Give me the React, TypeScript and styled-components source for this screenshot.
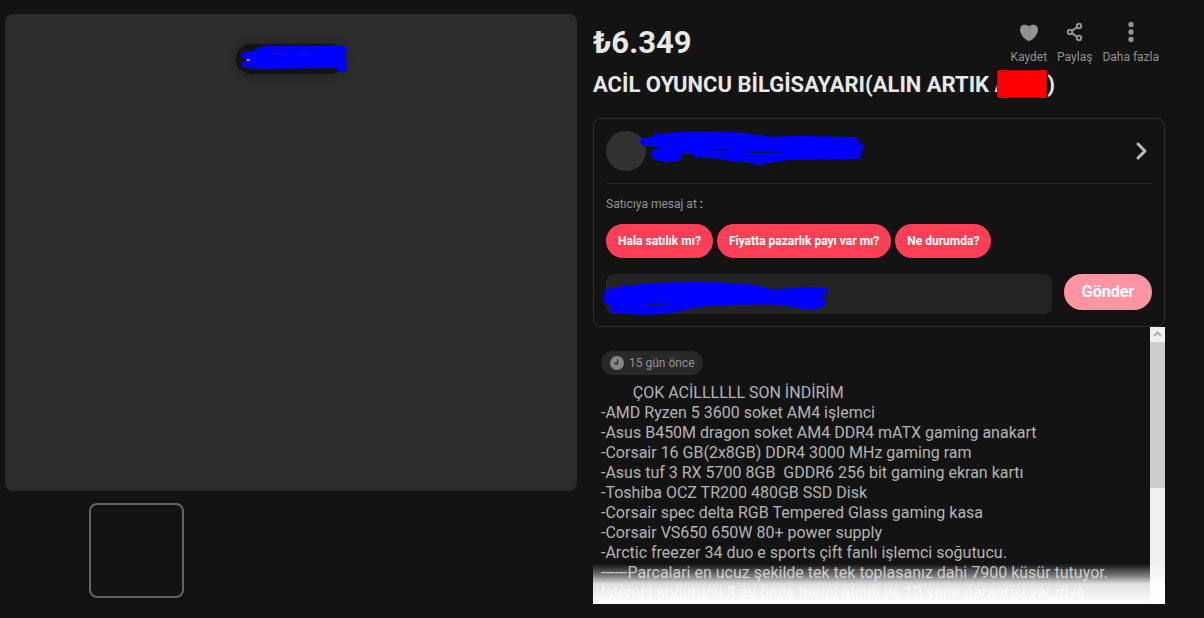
import React from "react";
import styled, { createGlobalStyle } from "styled-components";

const GlobalStyle = createGlobalStyle`
  *, *::before, *::after { box-sizing: border-box; }
  body {
    margin: 0;
    background: #131313;
    color: #e8e8e8;
    font-family: Roboto, "Liberation Sans", sans-serif;
    font-size: 16px;
  }
  button, input { font-family: inherit; }
`;

const Page = styled.main`
  display: grid;
  grid-template-columns: minmax(0, 1fr) minmax(0, 1fr);
  gap: 16px;
  padding: 14px 39px 14px 5px;
`;

const Gallery = styled.section`
  display: flex;
  flex-direction: column;
  gap: 12px;
`;

const Photo = styled.div`
  display: flex;
  justify-content: center;
  align-items: flex-start;
  aspect-ratio: 6 / 5;
  padding-top: 30px;
  border-radius: 8px;
  background: #2c2c2c;
`;

const PhotoTag = styled.div`
  position: relative;
  width: 110px;
  height: 30px;
  border-radius: 15px;
  background: #131313;
  box-shadow: 0 0 8px rgba(0, 0, 0, 0.3);
`;

const Thumbs = styled.div`
  display: flex;
  padding-left: 84px;
`;

const Thumb = styled.button`
  width: 95px;
  height: 95px;
  padding: 0;
  border: 2px solid #646464;
  border-radius: 8px;
  background: transparent;
`;

const Details = styled.section`
  display: flex;
  flex-direction: column;
`;

const Header = styled.header`
  display: flex;
  flex-direction: column;
  height: 104px;
`;

const PriceRow = styled.div`
  display: flex;
  justify-content: space-between;
  height: 56px;
  padding-right: 6px;
`;

const Price = styled.p`
  margin: 0;
  padding-top: 10px;
  font-size: 31px;
  line-height: 38px;
  font-weight: 700;
`;

const Actions = styled.div`
  display: flex;
  gap: 10px;
`;

const Action = styled.button`
  display: flex;
  flex-direction: column;
  align-items: center;
  gap: 4px;
  padding: 7px 0 0;
  border: 0;
  background: transparent;
  color: #929292;
  font-size: 12px;
  line-height: 16px;
`;

const Title = styled.h1`
  display: flex;
  align-items: flex-start;
  margin: 0;
  font-size: 22px;
  line-height: 30px;
  font-weight: 700;
  white-space: pre;
`;

const Redaction = styled.span`
  z-index: 1;
  width: 50px;
  height: 28px;
  margin-left: -12px;
  background: #ff0000;
  border: 1px solid #c40000;
`;

const Card = styled.section`
  padding: 12px;
  border: 1px solid #303030;
  border-radius: 8px;
`;

const Seller = styled.a`
  position: relative;
  display: flex;
  justify-content: space-between;
  align-items: center;
  padding-bottom: 12px;
  border-bottom: 1px solid #2a2a2a;
  color: #bcbcbc;
`;

const Avatar = styled.span`
  width: 40px;
  height: 40px;
  border-radius: 50%;
  background: #323232;
`;

const Prompt = styled.p`
  margin: 12px 0;
  font-size: 12px;
  line-height: 16px;
  color: #929292;
  b { color: #e8e8e8; font-weight: 400; }
`;

const Replies = styled.div`
  display: flex;
  gap: 4px;
`;

const Reply = styled.button`
  height: 34px;
  padding: 0 12px;
  border: 0;
  border-radius: 17px;
  background: #ff3f55;
  color: #fff;
  font-size: 12px;
  font-weight: 700;
  white-space: nowrap;
`;

const Form = styled.form`
  position: relative;
  display: flex;
  align-items: flex-start;
  gap: 12px;
  margin-top: 16px;
`;

const MessageInput = styled.input`
  flex: 1;
  min-width: 0;
  height: 40px;
  padding: 0 12px;
  border: 0;
  border-radius: 8px;
  background: #232323;
  color: #e8e8e8;
  font-size: 16px;
`;

const Send = styled.button`
  width: 88px;
  height: 36px;
  padding: 0 0 2px;
  border: 0;
  border-radius: 18px;
  background: #ff95a2;
  color: #fff;
  font-size: 16px;
  font-weight: 700;
`;

const Description = styled.section`
  position: relative;
  display: flex;
  height: 277px;
  overflow: hidden;
`;

const DescriptionBody = styled.div`
  flex: 1;
  min-width: 0;
  padding: 24px 8px 0;
`;

const Age = styled.div`
  display: flex;
  align-items: center;
  gap: 5px;
  width: fit-content;
  height: 24px;
  padding: 0 8px 0 9px;
  border-radius: 12px;
  background: #292929;
  color: #929292;
  font-size: 12px;
`;

const Copy = styled.p`
  margin: 8px 0 0;
  color: #b4b4b4;
  font-size: 16px;
  line-height: 20px;
  white-space: pre;
`;

const ScrollTrack = styled.div`
  display: flex;
  flex-direction: column;
  width: 15px;
  background: #f0f0f0;
  color: #b0b0b0;
`;

const ScrollThumb = styled.div`
  height: 146px;
  margin-bottom: auto;
  background: #cdcdcd;
`;

const Fade = styled.div`
  position: absolute;
  inset: auto 0 0 0;
  height: 40px;
  background: linear-gradient(
    rgba(255, 255, 255, 0),
    rgba(255, 255, 255, 0.45) 30%,
    rgba(255, 255, 255, 0.87) 50%,
    #fff
  );
  pointer-events: none;
`;

const Scribble = styled.svg<{ $left: number; $top: number }>`
  position: absolute;
  left: ${(p) => p.$left}px;
  top: ${(p) => p.$top}px;
  overflow: visible;
  pointer-events: none;
`;

const lines = [
  "        ÇOK ACİLLLLLL SON İNDİRİM",
  "-AMD Ryzen 5 3600 soket AM4 işlemci",
  "-Asus B450M dragon soket AM4 DDR4 mATX gaming anakart",
  "-Corsair 16 GB(2x8GB) DDR4 3000 MHz gaming ram",
  "-Asus tuf 3 RX 5700 8GB  GDDR6 256 bit gaming ekran kartı",
  "-Toshiba OCZ TR200 480GB SSD Disk",
  "-Corsair spec delta RGB Tempered Glass gaming kasa",
  "-Corsair VS650 650W 80+ power supply",
  "-Arctic freezer 34 duo e sports çift fanlı işlemci soğutucu.",
  "------Parcalari en ucuz şekilde tek tek toplasanız dahi 7900 küsür tutuyor.",
  "İşlemci soğutucu 3 ay önce harici alındı ve 10 sene garantisi var diye",
];

const replies = ["Hala satılık mı?", "Fiyatta pazarlık payı var mı?", "Ne durumda?"];

const HeartIcon = () => (
  <svg width="24" height="24" viewBox="0 0 24 24" fill="currentColor" aria-hidden="true">
    <path d="M12 20C9.600 20 3 14.200 3 8.700C3 5.800 5 3.800 7.600 3.800C9.500 3.800 11.100 4.300 12 5.500C12.900 4.300 14.500 3.800 16.400 3.800C19 3.800 21 5.800 21 8.700C21 14.200 14.400 20 12 20Z" />
  </svg>
);

const ShareIcon = () => (
  <svg width="24" height="24" viewBox="0 0 24 24" fill="none" stroke="currentColor" strokeWidth="2" aria-hidden="true">
    <circle cx="16" cy="5" r="2.200" />
    <circle cx="7" cy="11" r="2.200" />
    <circle cx="16" cy="17" r="2.200" />
    <path d="M9 9.700L14 6.300M9 12.300L14 15.700" />
  </svg>
);

const MoreIcon = () => (
  <svg width="24" height="24" viewBox="0 0 24 24" fill="currentColor" aria-hidden="true">
    <circle cx="12" cy="3.500" r="2.700" />
    <circle cx="12" cy="11" r="2.700" />
    <circle cx="12" cy="18.500" r="2.700" />
  </svg>
);

const ClockIcon = () => (
  <svg width="14" height="14" viewBox="0 0 14 14" aria-hidden="true">
    <circle cx="7" cy="7" r="7" fill="#858585" />
    <path d="M7.500 3.500V7.500H4" fill="none" stroke="#292929" strokeWidth="1.300" />
  </svg>
);

export default function App() {
  return (
    <>
      <GlobalStyle />
      <Page>
        <Gallery>
          <Photo>
            <PhotoTag>
              <Scribble $left={0} $top={0} width="112" height="30" fill="#0000ff" aria-hidden="true">
                <path d="M9 8H16C20 4 26 2 34 2L106 1C112 2 112 8 109 10V14C112 17 111 20 110 21C113 26 108 30 104 28C101 28 101 25 100 24L30 25L9 24C4 23 5 18 9 17H13V15H9C4 14 4 9 9 8Z" />
                <path d="M10 15H14V17H11Z" fill="#c66a72" />
                <path d="M36 9.500H48M64 9.500H72" stroke="#1c1c80" />
              </Scribble>
            </PhotoTag>
          </Photo>
          <Thumbs>
            <Thumb type="button" aria-label="Fotoğraf 1" />
          </Thumbs>
        </Gallery>

        <Details>
          <Header>
            <PriceRow>
              <Price>₺6.349</Price>
              <Actions>
                <Action type="button"><HeartIcon />Kaydet</Action>
                <Action type="button"><ShareIcon />Paylaş</Action>
                <Action type="button"><MoreIcon />Daha fazla</Action>
              </Actions>
            </PriceRow>
            <Title>ACİL OYUNCU BİLGİSAYARI(ALIN ARTIK A<Redaction />)</Title>
          </Header>

          <Card>
            <Seller href="#satici" aria-label="Satıcı profili">
              <Avatar />
              <svg width="24" height="24" viewBox="0 0 24 24" fill="none" stroke="currentColor" strokeWidth="3" strokeLinecap="round" strokeLinejoin="round" aria-hidden="true">
                <path d="M10 5L17 12L10 19" />
              </svg>
              <Scribble $left={34} $top={0} width="224" height="34" fill="#0000ff" aria-hidden="true">
                <path fillRule="evenodd" d="M4 7L12 6C15 2 20 3 26 2C46 0 80 0 104 2L132 6C160 4 190 6 214 6C219 6 219 10 219 12C225 12 226 19 220 21C224 24 221 28 214 28L150 29C140 30 130 32 118 34C111 34 110 31 104 31C94 30 89 31 84 28L65 27C62 26 61 25 60 26C56 28 53 25 53 23H42C44 28 39 31 35 30L25 31C18 30 10 28 11 22C11 19 15 18 19 18L18 16L5 15C-1 14 -2 8 4 7ZM76 20L89 19L90 18L80 18ZM102 22C118 22 135 22 142 21C130 21 112 21 102 22Z" />
              </Scribble>
            </Seller>
            <Prompt>Satıcıya mesaj at <b>:</b></Prompt>
            <Replies>
              {replies.map((text) => (
                <Reply type="button" key={text}>{text}</Reply>
              ))}
            </Replies>
            <Form onSubmit={(e) => e.preventDefault()}>
              <MessageInput type="text" aria-label="Mesaj" />
              <Send type="submit">Gönder</Send>
              <Scribble $left={-3} $top={7} width="226" height="34" fill="#0000ff" aria-hidden="true">
                <path fillRule="evenodd" d="M4 9C12 5 22 5 30 4C66 0 100 1 132 2C150 3 160 6 170 8L219 6C226 6 227 12 222 14C219 15 221 16 222 19C223 25 219 28 214 28C195 29 187 25 180 24C150 23 120 24 98 26C83 28 73 32 60 33C45 34 29 34 14 32C6 32 5 26 9 24C0 24 -3 17 3 15C-1 13 0 10 4 9ZM30 25C45 25 60 24 72 22C58 23 44 23 30 25Z" />
              </Scribble>
            </Form>
          </Card>

          <Description>
            <DescriptionBody>
              <Age><ClockIcon />15 gün önce</Age>
              <Copy>{lines.join("\n")}</Copy>
            </DescriptionBody>
            <ScrollTrack aria-hidden="true">
              <svg width="15" height="15" viewBox="0 0 15 15" fill="none" stroke="currentColor" strokeWidth="2">
                <path d="M4 9L7.500 5.500L11 9" />
              </svg>
              <ScrollThumb />
              <svg width="15" height="15" viewBox="0 0 15 15" fill="none" stroke="currentColor" strokeWidth="2">
                <path d="M4 6L7.500 9.500L11 6" />
              </svg>
            </ScrollTrack>
            <Fade />
          </Description>
        </Details>
      </Page>
    </>
  );
}
